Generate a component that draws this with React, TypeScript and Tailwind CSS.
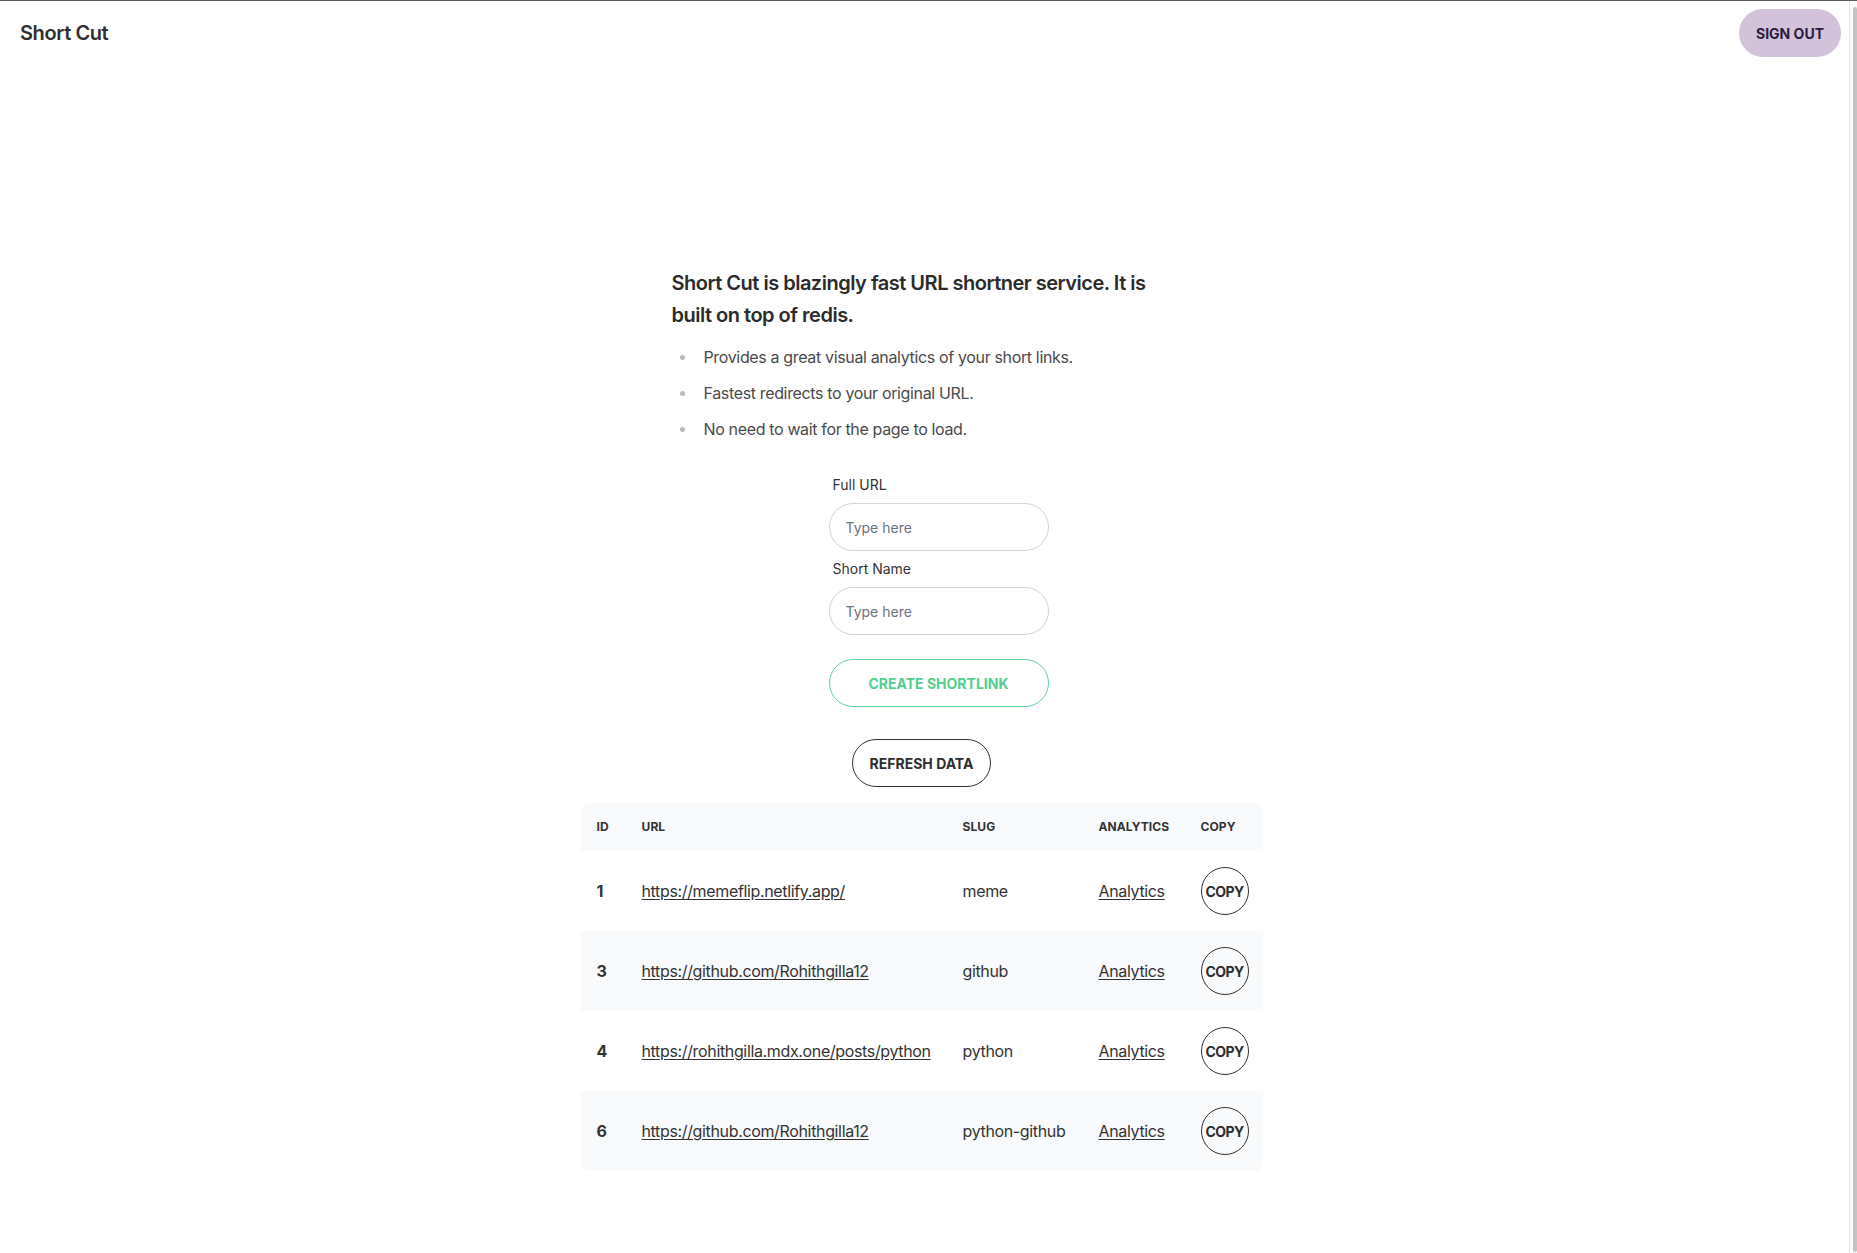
import React from "react";

const rows = [
  { id: 1, url: "https://memeflip.netlify.app/", slug: "meme" },
  { id: 3, url: "https://github.com/Rohithgilla12", slug: "github" },
  { id: 4, url: "https://rohithgilla.mdx.one/posts/python", slug: "python" },
  { id: 6, url: "https://github.com/Rohithgilla12", slug: "python-github" },
];

export default function App() {
  return (
    <div className="min-h-screen flex border-t border-[#5b5b5b] bg-white text-[#333] font-['Inter','Noto_Sans',sans-serif]">
      <div className="flex-1 flex flex-col">
        {/* Navbar */}
        <header className="h-16 flex items-center justify-between pl-5 pr-2">
          <h1 className="text-[20px] font-semibold tracking-[-0.4px] text-[#2f2f2f]">Short Cut</h1>
          <button className="h-12 px-[17px] rounded-full bg-[#d2c3db] text-[14px] font-bold text-[#2c1a40]">
            SIGN OUT
          </button>
        </header>

        <main className="flex flex-col items-center pt-[202px] pb-[83px] pr-[6px]">
          {/* Intro */}
          <div className="w-[500px]">
            <h3 className="text-[20px] leading-[32px] font-semibold tracking-[-0.5px] text-[#2b2b2b] whitespace-nowrap">
              Short Cut is blazingly fast URL shortner service. It is
              <br />
              built on top of redis.
            </h3>
            <ul className="mt-[12px] space-y-2 text-[16px] leading-[28px] text-[#4a4a4a] tracking-[-0.35px]">
              <li className="flex items-center">
                <span className="w-[5px] h-[5px] rounded-full bg-[#b9b9b9] ml-[8px] mr-[19px]" />
                Provides a great visual analytics of your short links.
              </li>
              <li className="flex items-center">
                <span className="w-[5px] h-[5px] rounded-full bg-[#b9b9b9] ml-[8px] mr-[19px]" />
                Fastest redirects to your original URL.
              </li>
              <li className="flex items-center">
                <span className="w-[5px] h-[5px] rounded-full bg-[#b9b9b9] ml-[8px] mr-[19px]" />
                No need to wait for the page to load.
              </li>
            </ul>
          </div>

          {/* Form */}
          <div className="w-[220px] ml-[34px] mt-[32px] flex flex-col">
            <label className="px-1 text-[14px] leading-5 text-[#333]">Full URL</label>
            <input
              placeholder="Type here"
              className="mt-2 h-12 rounded-full border border-[#d4d4d4] px-4 text-[14px] placeholder:text-[#6b7280] outline-none"
            />
            <label className="mt-2 px-1 text-[14px] leading-5 text-[#333]">Short Name</label>
            <input
              placeholder="Type here"
              className="mt-2 h-12 rounded-full border border-[#d4d4d4] px-4 text-[14px] placeholder:text-[#6b7280] outline-none"
            />
            <button className="mt-6 h-12 rounded-full border border-[#62d29c] text-[14px] font-bold text-[#52cf8e]">
              CREATE SHORTLINK
            </button>
          </div>

          <button className="mt-8 h-12 px-[17px] rounded-full border border-[#333] text-[14px] font-bold text-[#2d2d2d]">
            REFRESH DATA
          </button>

          {/* Links table */}
          <div className="mt-4 w-[682px] rounded-lg overflow-hidden">
            <table className="w-full table-fixed text-left">
              <thead className="bg-[#f9fafb]">
                <tr className="text-[12px] font-bold uppercase tracking-[0.1px] text-[#333]">
                  <th className="w-[45px] px-4 h-12">ID</th>
                  <th className="w-[321px] px-4 h-12">URL</th>
                  <th className="w-[136px] px-4 h-12">Slug</th>
                  <th className="w-[102px] px-4 h-12">Analytics</th>
                  <th className="w-[78px] px-4 h-12">Copy</th>
                </tr>
              </thead>
              <tbody className="text-[16px] text-[#333] tracking-[-0.35px]">
                {rows.map((r, i) => (
                  <tr key={r.id} className={i % 2 === 1 ? "bg-[#f9fafb]" : "bg-white"}>
                    <td className="px-4 h-20 font-bold">{r.id}</td>
                    <td className="px-4 whitespace-nowrap">
                      <a href="#" className="underline underline-offset-2">{r.url}</a>
                    </td>
                    <td className="px-4 whitespace-nowrap">{r.slug}</td>
                    <td className="px-4">
                      <a href="#" className="underline underline-offset-2">Analytics</a>
                    </td>
                    <td className="px-4">
                      <button className="w-12 h-12 rounded-full border border-[#333] flex items-center justify-center text-[14px] font-bold tracking-[-0.6px] text-[#2d2d2d]">
                        COPY
                      </button>
                    </td>
                  </tr>
                ))}
              </tbody>
            </table>
          </div>
        </main>
      </div>

      {/* Scrollbar */}
      <div className="w-2 border-l border-[#e4e4e4] bg-[#fafafa] flex flex-col pt-[6px] pb-[2px] pl-[3px]">
        <div className="flex-1 rounded-full bg-[#c3c3c3]" />
      </div>
    </div>
  );
}
